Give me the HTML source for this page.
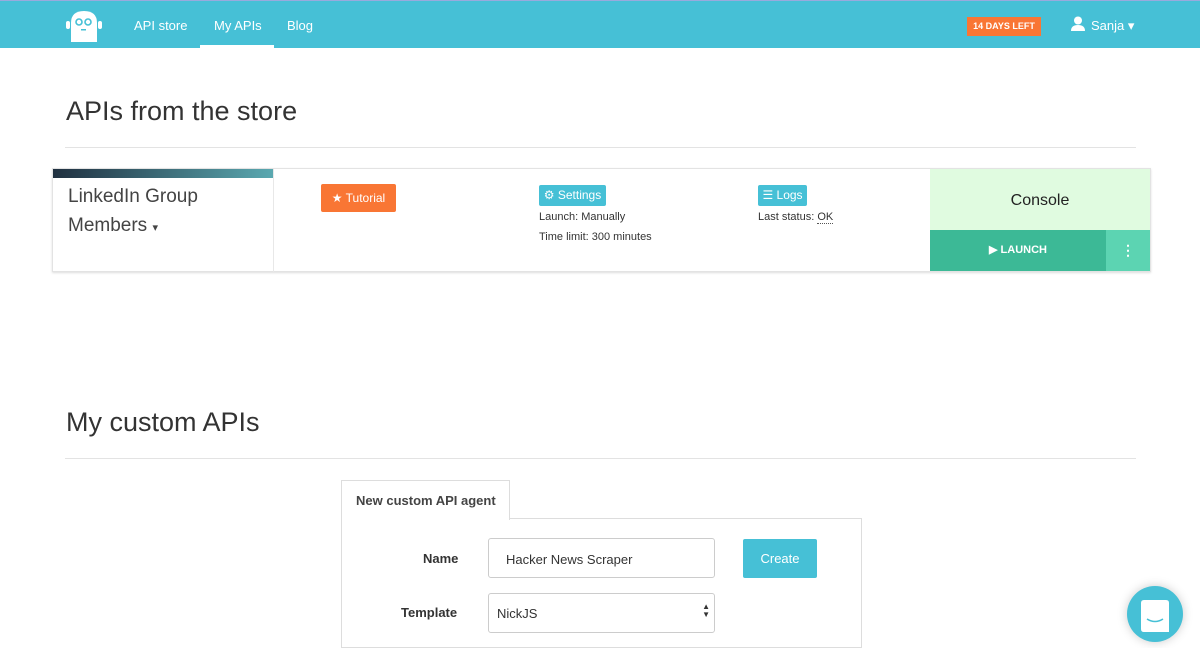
<!DOCTYPE html>
<html><head><style>
*{box-sizing:border-box;margin:0;padding:0}
body{width:1200px;height:632px;overflow:hidden;background:#fff;font-family:"Liberation Sans",sans-serif;color:#333;position:relative}
.nav{position:absolute;left:0;top:0;width:1200px;height:48px;background:#46c0d6;border-top:1px solid #9ad}
.nav a{position:absolute;top:17px;color:#fff;font-size:13px}
.abs{position:absolute}
h1{position:absolute;font-weight:300;font-size:27px;color:#333}
.hr{position:absolute;left:65px;width:1071px;height:1px;background:#e3e3e3}
.btn{position:absolute;color:#fff;font-size:11px;border-radius:2px}
</style></head><body>
<div class="nav">
<svg class="abs" style="left:66px;top:8px" width="36" height="34" viewBox="0 0 36 34"><rect x="0" y="12" width="4" height="8" rx="2" fill="#fff"/><rect x="32" y="12" width="4" height="8" rx="2" fill="#fff"/><path d="M5 14 Q5 2 18 2 Q31 2 31 14 L31 33 L5 33Z" fill="#fff"/><circle cx="13" cy="13" r="3" fill="none" stroke="#46c0d6" stroke-width="1.6"/><circle cx="22" cy="13" r="3" fill="none" stroke="#46c0d6" stroke-width="1.6"/><rect x="15" y="20" width="5" height="1.5" fill="#46c0d6"/></svg>
<a style="left:134px">API store</a>
<a style="left:214px">My APIs</a>
<div class="abs" style="left:200px;top:44px;width:74px;height:4px;background:#fff"></div>
<a style="left:287px">Blog</a>
<div class="abs" style="left:967px;top:16px;width:74px;height:19px;background:#f97634;color:#fff;font-size:9px;font-weight:bold;text-align:center;line-height:19px">14 DAYS LEFT</div>
<svg class="abs" style="left:1071px;top:15px" width="14" height="15" viewBox="0 0 14 15"><circle cx="7" cy="4.5" r="4" fill="#fff"/><path d="M0 15 Q0 9 7 9 Q14 9 14 15Z" fill="#fff"/></svg>
<a style="left:1091px">Sanja ▾</a>
</div>
<h1 style="left:66px;top:96px">APIs from the store</h1>
<div class="hr" style="top:147px"></div>
<div class="abs" style="left:52px;top:168px;width:1099px;height:104px;border:1px solid #e3e3e3;box-shadow:0 1px 2px #ddd"></div>
<div class="abs" style="left:53px;top:169px;width:220px;height:9px;background:linear-gradient(90deg,#203040,#5aa8b0)"></div>
<div class="abs" style="left:273px;top:169px;width:1px;height:103px;background:#e8e8e8"></div>
<div class="abs" style="left:68px;top:182px;font-size:19px;font-weight:300;line-height:29px;color:#444">LinkedIn Group<br>Members <span style="font-size:11px">▾</span></div>
<div class="btn" style="left:321px;top:184px;width:75px;height:28px;background:#f97634;line-height:28px;text-align:center;font-size:12px">★ Tutorial</div>
<div class="btn" style="left:539px;top:185px;width:67px;height:21px;background:#46c0d6;line-height:21px;text-align:center;font-size:12px">⚙ Settings</div>
<div class="abs" style="left:539px;top:207px;font-size:11px;line-height:20px">Launch: Manually<br>Time limit: 300 minutes</div>
<div class="btn" style="left:758px;top:185px;width:49px;height:21px;background:#46c0d6;line-height:21px;text-align:center;font-size:12px">☰ Logs</div>
<div class="abs" style="left:758px;top:209px;font-size:11px;line-height:16px">Last status: <span style="border-bottom:1px dotted #555">OK</span></div>
<div class="abs" style="left:930px;top:169px;width:220px;height:61px;background:#e0fbe0;text-align:center;font-size:16px;line-height:64px;color:#222">Console</div>
<div class="abs" style="left:930px;top:230px;width:176px;height:41px;background:#3cb996;color:#fff;font-size:11px;font-weight:bold;text-align:center;line-height:41px">▶ LAUNCH</div>
<div class="abs" style="left:1106px;top:230px;width:44px;height:41px;background:#5cd4b2;color:#fff;font-size:14px;font-weight:bold;text-align:center;line-height:41px">⋮</div>
<h1 style="left:66px;top:407px">My custom APIs</h1>
<div class="hr" style="top:458px"></div>
<div class="abs" style="left:341px;top:480px;width:169px;height:40px;border:1px solid #ddd;border-bottom:none;background:#fff;z-index:2;font-size:13px;font-weight:bold;padding:12px 0 0 14px;color:#444">New custom API agent</div>
<div class="abs" style="left:341px;top:518px;width:521px;height:130px;border:1px solid #ddd"></div>
<div class="abs" style="left:423px;top:551px;font-size:13px;font-weight:bold">Name</div>
<div class="abs" style="left:488px;top:538px;width:227px;height:40px;border:1px solid #ccc;border-radius:3px;font-size:13px;padding:13px 0 0 17px">Hacker News Scraper</div>
<div class="abs" style="left:743px;top:539px;width:74px;height:39px;background:#46c0d6;border-radius:2px;color:#fff;font-size:13px;text-align:center;line-height:39px">Create</div>
<div class="abs" style="left:401px;top:605px;font-size:13px;font-weight:bold">Template</div>
<div class="abs" style="left:488px;top:593px;width:227px;height:40px;border:1px solid #ccc;border-radius:3px;font-size:13px;padding:12px 0 0 8px">NickJS<span style="position:absolute;right:4px;top:9px;font-size:8px;line-height:8px">▲<br>▼</span></div>
<div class="abs" style="left:1127px;top:586px;width:56px;height:56px;border-radius:50%;background:#46c0d6;box-shadow:0 0 10px #ccc"></div>
<svg class="abs" style="left:1141px;top:600px" width="28" height="32" viewBox="0 0 28 32"><path d="M3 0 H25 Q28 0 28 3 V32 H3 Q0 32 0 29 V3 Q0 0 3 0Z" fill="#fff"/><path d="M6 19 Q14 24 22 19" stroke="#46c0d6" stroke-width="1.6" fill="none"/></svg>
</body></html>
